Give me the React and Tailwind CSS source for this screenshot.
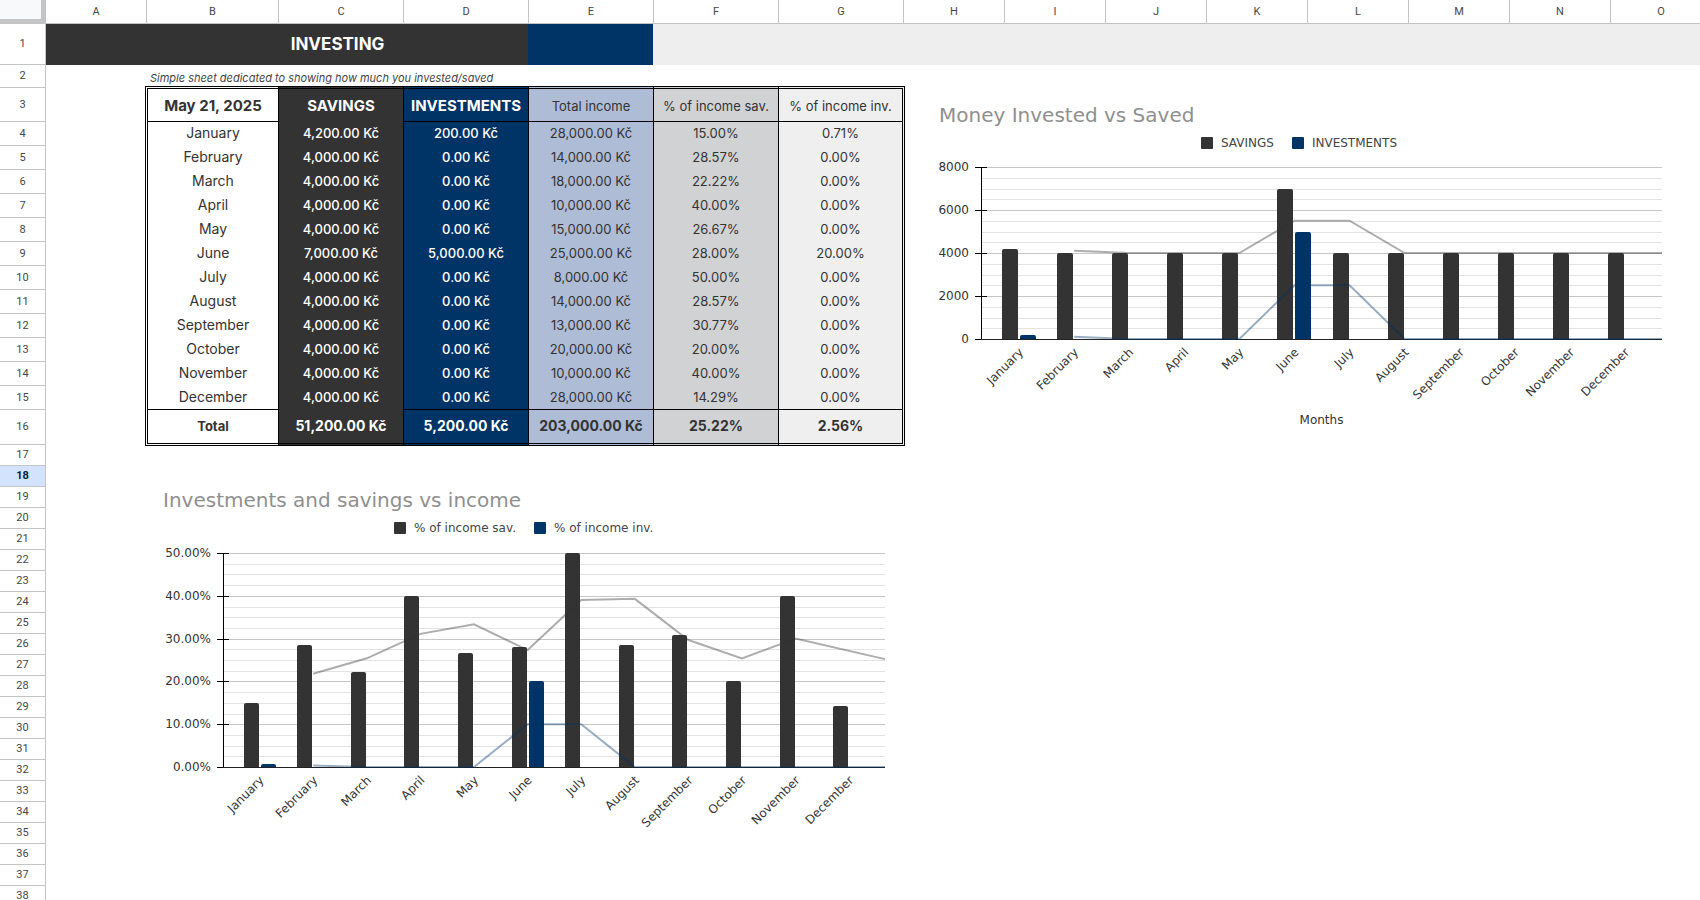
const COLUMNS = [
  ['A', 'w-[101px]'],
  ['B', 'w-[132px]'],
  ['C', 'w-[125px]'],
  ['D', 'w-[125px]'],
  ['E', 'w-[125px]'],
  ['F', 'w-[125px]'],
  ['G', 'w-[125px]'],
  ...'HIJKLMNO'.split('').map((c) => [c, 'w-[101px]']),
];

const ROW_HEIGHTS = { 1: 'h-[41px]', 2: 'h-[23px]', 3: 'h-[34px]', 16: 'h-[35px]' };
const ROWS = Array.from({ length: 38 }, (_, i) => i + 1);
const ACTIVE_ROW = 18;

const rowHeight = (n) => ROW_HEIGHTS[n] || (n < 16 ? 'h-[24px]' : 'h-[21px]');

const DATA = [
  ['January', 4200, 200, 28000, 15, 0.71],
  ['February', 4000, 0, 14000, 28.57, 0],
  ['March', 4000, 0, 18000, 22.22, 0],
  ['April', 4000, 0, 10000, 40, 0],
  ['May', 4000, 0, 15000, 26.67, 0],
  ['June', 7000, 5000, 25000, 28, 20],
  ['July', 4000, 0, 8000, 50, 0],
  ['August', 4000, 0, 14000, 28.57, 0],
  ['September', 4000, 0, 13000, 30.77, 0],
  ['October', 4000, 0, 20000, 20, 0],
  ['November', 4000, 0, 10000, 40, 0],
  ['December', 4000, 0, 28000, 14.29, 0],
];

const MONTHS = DATA.map((d) => d[0]);
const column = (i) => DATA.map((d) => d[i]);

const money = (v) => v.toLocaleString('en-US', { minimumFractionDigits: 2 }) + ' Kč';
const percent = (v) => v.toFixed(2) + '%';

function ColumnHeader() {
  return (
    <div className="flex h-6 shrink-0 overflow-hidden border-b border-[#c4c4c4] text-[11px] leading-4 text-[#444746]">
      <div className="-mb-px h-6 w-[46px] shrink-0 border-r-[5px] border-b-[5px] border-[#c4c4c4] bg-[#f8f9fa]" />
      {COLUMNS.map(([name, width]) => (
        <div key={name} className={`flex shrink-0 items-center justify-center border-r border-[#c4c4c4] ${width}`}>
          {name}
        </div>
      ))}
    </div>
  );
}

function RowHeader() {
  return (
    <div className="w-[46px] shrink-0 border-r border-[#c4c4c4] text-[11px] leading-4 text-[#444746]">
      {ROWS.map((n) => (
        <div
          key={n}
          className={`flex items-center justify-center border-b border-[#c4c4c4] ${rowHeight(n)} ${
            n === ACTIVE_ROW ? 'bg-[#d3e3fd] font-bold text-[#041e49]' : ''
          }`}
        >
          {n}
        </div>
      ))}
    </div>
  );
}

function Banner() {
  return (
    <div className="flex h-[41px]">
      <div className="w-[101px] shrink-0 bg-[#333333]" />
      <h1 className="flex w-[381px] shrink-0 items-center justify-center bg-[#333333] pt-px text-[17px] font-bold text-white">
        INVESTING
      </h1>
      <div className="w-[125px] shrink-0 bg-[#003366]" />
      <div className="grow bg-[#eeeeee]" />
    </div>
  );
}

const CELL = [
  'border-l-[3px] border-l-black [border-left-style:double] border-r border-r-black bg-white',
  'border-r border-r-black bg-[#333333] text-white',
  'border-r border-r-black bg-[#003366] text-white',
  'border-r border-r-black bg-[#afbcd5]',
  'border-r border-r-black bg-[#d1d2d4]',
  'border-r-[3px] border-r-black [border-right-style:double] bg-[#efefef]',
];

const TOP = 'border-t-[3px] border-t-black [border-top-style:double]';
const BOTTOM = 'border-b-[3px] border-b-black [border-bottom-style:double]';
const rule = (i) => (i === 1 ? '' : 'shadow-[inset_0_-1px_0_#000]');

function SummaryTable() {
  const head = ['May 21, 2025', 'SAVINGS', 'INVESTMENTS', 'Total income', '% of income sav.', '% of income inv.'];
  const total = ['Total', money(51200), money(5200), money(203000), percent(25.22), percent(2.56)];
  return (
    <table className="w-[760px] table-fixed border-separate border-spacing-0 text-center text-[13px] leading-4 text-[#333333]">
      <colgroup>
        <col className="w-[134px]" />
        <col className="w-[125px]" />
        <col className="w-[125px]" />
        <col className="w-[125px]" />
        <col className="w-[125px]" />
        <col className="w-[126px]" />
      </colgroup>
      <thead>
        <tr className="h-9">
          {head.map((h, i) => (
            <th
              key={h}
              scope="col"
              className={`whitespace-nowrap p-0 ${i < 3 ? 'text-[15px] font-bold' : 'font-normal'} ${CELL[i]} ${TOP} ${rule(i)}`}
            >
              {h}
            </th>
          ))}
        </tr>
      </thead>
      <tbody>
        {DATA.map(([month, sav, inv, income, savPct, invPct], r) => (
          <tr key={month} className="h-6">
            {[month, money(sav), money(inv), money(income), percent(savPct), percent(invPct)].map((v, i) => (
              <td
                key={i}
                className={`p-0 pb-[2px] ${i === 0 ? 'text-sm leading-4' : ''} ${i === 1 || i === 2 ? 'font-medium' : ''} ${
                  CELL[i]
                } ${r === 11 ? rule(i) : ''}`}
              >
                {v}
              </td>
            ))}
          </tr>
        ))}
      </tbody>
      <tfoot>
        <tr className="h-9">
          {total.map((v, i) => (
            <td key={i} className={`p-0 pb-[2px] font-bold ${i > 0 ? 'text-sm' : ''} ${CELL[i]} ${BOTTOM}`}>
              {v}
            </td>
          ))}
        </tr>
      </tfoot>
    </table>
  );
}

function Chart({ title, legend, legendPad, plot, max, minorSteps, ticks, series, trends, axisTitle }) {
  const { left, right, top, height, first, pitch, bar } = plot;
  const bottom = top + height;
  const y = (v) => bottom - (v / max) * height;
  const cx = (i) => first + i * pitch;
  const colors = ['#333333', '#003366'];
  const minors = Array.from({ length: minorSteps + 1 }, (_, i) => Math.round(top + (i * height) / minorSteps));
  return (
    <figure className="font-['DejaVu_Sans',Verdana,sans-serif] text-[#444444]">
      <h2 className="text-xl leading-7 text-[#8f8f8f]">{title}</h2>
      <figcaption className={`mt-[6px] flex gap-[18px] text-xs leading-4 ${legendPad}`}>
        {legend.map((name, i) => (
          <span key={name} className="flex items-center gap-2">
            <span className={`size-3 rounded-[1px] ${i === 0 ? 'bg-[#333333]' : 'bg-[#003366]'}`} />
            {name}
          </span>
        ))}
      </figcaption>
      <svg className="mt-2 block overflow-visible" width={right} height={bottom + 90} role="img" aria-label={title}>
        {minors.map((v) => (
          <line key={v} x1={left} x2={right} y1={v + 0.5} y2={v + 0.5} stroke="#e3e3e3" />
        ))}
        {ticks.map(([v, label]) => (
          <g key={label}>
            <line x1={left} x2={right} y1={Math.round(y(v)) + 0.5} y2={Math.round(y(v)) + 0.5} stroke="#c6c6c6" />
            <line x1={left - 6} x2={left + 6} y1={Math.round(y(v)) + 0.5} y2={Math.round(y(v)) + 0.5} stroke="#000" />
            <text x={left - 12} y={Math.round(y(v)) + 4} textAnchor="end" fontSize="12" fill="#333333">
              {label}
            </text>
          </g>
        ))}
        <line x1={left + 0.5} x2={left + 0.5} y1={top} y2={bottom + 1} stroke="#000" />
        {series.map((values, s) =>
          values.map((v, i) => {
            if (!v) return null;
            const x = Math.round(cx(i)) + (s === 0 ? -bar - 1 : 1);
            const t = Math.round(y(v));
            const r = 2;
            return (
              <path
                key={`${s}-${i}`}
                fill={colors[s]}
                d={`M${x} ${bottom}V${t + r}q0 ${-r} ${r} ${-r}H${x + bar - r}q${r} 0 ${r} ${r}V${bottom}Z`}
              />
            );
          })
        )}
        <line x1={left} x2={right} y1={bottom + 0.5} y2={bottom + 0.5} stroke="#222222" />
        {trends.map((values, s) => (
          <polyline
            key={s}
            fill="none"
            stroke={colors[s]}
            strokeOpacity="0.4"
            strokeWidth="2"
            points={values
              .map((v, i) => `${i === values.length - 1 ? right : cx(i + 1)},${y(v)}`)
              .join(' ')}
          />
        ))}
        {MONTHS.map((m, i) => {
          const x = cx(i) + 5;
          const ly = bottom + 14;
          return (
            <text key={m} x={x} y={ly} textAnchor="end" fontSize="12" fill="#333333" transform={`rotate(-45 ${x} ${ly})`}>
              {m}
            </text>
          );
        })}
        {axisTitle && (
          <text x={(left + right) / 2} y={bottom + 85} textAnchor="middle" fontSize="12" fill="#333333">
            {axisTitle}
          </text>
        )}
      </svg>
    </figure>
  );
}

export default function App() {
  return (
    <div className="flex h-screen flex-col overflow-hidden bg-white font-[Roboto,sans-serif]">
      <ColumnHeader />
      <div className="flex min-h-0 grow overflow-hidden">
        <RowHeader />
        <main className="min-w-0 grow font-[Inter,sans-serif]">
          <Banner />
          <p className="flex h-[21px] items-end pl-[104px] text-[11px] leading-4 text-[#444444] italic">
            Simple sheet dedicated to showing how much you invested/saved
          </p>
          <div className="flex pl-[99px]">
            <div className="shrink-0">
              <SummaryTable />
              <div className="pt-10 pl-[18px]">
                <Chart
                  title="Investments and savings vs income"
                  legend={['% of income sav.', '% of income inv.']}
                  legendPad="pl-[231px]"
                  plot={{ left: 60, right: 722, top: 9, height: 214, first: 96.6, pitch: 53.6, bar: 15 }}
                  max={50}
                  minorSteps={20}
                  ticks={[0, 10, 20, 30, 40, 50].map((v) => [v, percent(v)])}
                  series={[column(4), column(5)]}
                  trends={[
                    [21.79, 25.4, 31.11, 33.33, 27.33, 39, 39.29, 29.67, 25.38, 30, 27.15, 25.2],
                    [0.36, 0, 0, 0, 10, 10, 0, 0, 0, 0, 0, 0],
                  ].map((t) => t.filter((_, i) => i !== 10))}
                />
              </div>
            </div>
            <div className="shrink-0 pt-[15px] pl-[34px]">
              <Chart
                title="Money Invested vs Saved"
                legend={['SAVINGS', 'INVESTMENTS']}
                legendPad="pl-[262px]"
                plot={{ left: 42, right: 723, top: 8, height: 172, first: 80, pitch: 55.09, bar: 16 }}
                max={8000}
                minorSteps={16}
                ticks={[0, 2000, 4000, 6000, 8000].map((v) => [v, String(v)])}
                series={[column(1), column(2)]}
                trends={[
                  [4100, 4000, 4000, 4000, 5500, 5500, 4000, 4000, 4000, 4000, 4000, 4000],
                  [100, 0, 0, 0, 2500, 2500, 0, 0, 0, 0, 0, 0],
                ]}
                axisTitle="Months"
              />
            </div>
          </div>
        </main>
      </div>
    </div>
  );
}
